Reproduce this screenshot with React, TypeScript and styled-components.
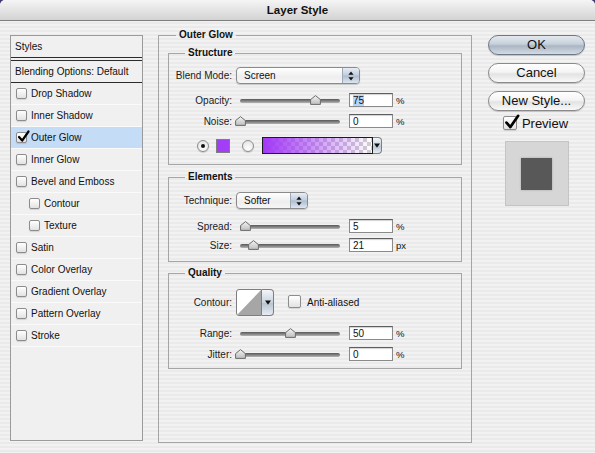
import React from "react";
import styled, { createGlobalStyle, css } from "styled-components";

const GlobalStyle = createGlobalStyle`
  html, body { margin: 0; padding: 0; background: #3b376c; }
  body { font-family: "Liberation Sans", Arial, sans-serif; font-size: 10px; color: #111; }
  * { box-sizing: border-box; }
`;

const pinstripe = css`
  background-color: #efefef;
  background-image: repeating-linear-gradient(
    180deg,
    #f2f2f2 0px,
    #f2f2f2 2px,
    #eaeaea 2px,
    #eaeaea 4px
  );
`;

const Window = styled.div`
  width: 595px;
  height: 453px;
  overflow: hidden;
  ${pinstripe}
  border-radius: 5px 5px 0 0;
  display: flex;
  flex-direction: column;
`;

const TitleBar = styled.div`
  height: 21px;
  flex: none;
  background: linear-gradient(#f5f5f5, #d3d3d3);
  border-bottom: 1px solid #7d7d7d;
  border-radius: 5px 5px 0 0;
  display: flex;
  align-items: center;
  justify-content: center;
  font-weight: bold;
  font-size: 11.5px;
  color: #111;
`;

const Body = styled.div`
  display: flex;
  align-items: flex-start;
  padding: 8px 10px 0 10px;
`;

/* ---------- left styles list ---------- */

const StylesPanel = styled.div`
  width: 133px;
  height: 406px;
  margin-top: 6px;
  border: 1px solid #9b9b9b;
  background: #f0f0f0;
  display: flex;
  flex-direction: column;
  flex: none;
`;

const PanelHeader = styled.div<{ $top?: boolean }>`
  height: ${(p) => (p.$top ? 22 : 23)}px;
  display: flex;
  align-items: center;
  padding-left: 4px;
  border-bottom: 1px solid #2b2b2b;
  ${(p) =>
    !p.$top &&
    css`
      margin-top: 2px;
      border-top: 1px solid #2b2b2b;
    `}
`;

const StyleItem = styled.div<{ $sub?: boolean; $active?: boolean }>`
  height: 22px;
  display: flex;
  align-items: center;
  gap: 4px;
  padding-left: ${(p) => (p.$sub ? 18 : 5)}px;
  border-bottom: 1px solid #fafafa;
  background: ${(p) => (p.$active ? "#c5dcf6" : "transparent")};
`;

const Box = styled.span<{ $size: number }>`
  width: ${(p) => p.$size}px;
  height: ${(p) => p.$size}px;
  flex: none;
  border: 1px solid #8c8c8c;
  border-radius: 2px;
  background: linear-gradient(#ffffff, #e2e2e2);
  box-shadow: 0 1px 1px rgba(0, 0, 0, 0.12);
  position: relative;
  display: inline-flex;
  align-items: center;
  justify-content: center;
`;

const CheckMark = styled.svg`
  position: absolute;
  left: 0px;
  top: -3px;
  overflow: visible;
`;

const Checkbox: React.FC<{ size?: number; checked?: boolean }> = ({ size = 11, checked }) => (
  <Box $size={size}>
    {checked && (
      <CheckMark width={size + 2} height={size + 2} viewBox="0 0 13 13">
        <path d="M2 7 L5.2 10.6 L11.5 1.5" fill="none" stroke="#000" strokeWidth="2.2" strokeLinecap="round" strokeLinejoin="round" />
      </CheckMark>
    )}
  </Box>
);

/* ---------- main settings ---------- */

const MainGroup = styled.fieldset`
  width: 314px;
  height: 414px;
  margin: 0 0 0 15px;
  padding: 0 9px;
  border: 1px solid #a5a5a5;
  flex: none;
  min-width: 0;
`;

const Legend = styled.legend<{ $inset: number }>`
  font-weight: bold;
  font-size: 10px;
  line-height: 12px;
  padding: 0 3px;
  margin-left: ${(p) => p.$inset}px;
  color: #111;
`;

const SubGroup = styled.fieldset<{ $pt: number; $pb: number; $mt: number }>`
  margin: ${(p) => p.$mt}px 0 0 0;
  padding: ${(p) => p.$pt}px 0 ${(p) => p.$pb}px 0;
  border: 1px solid #a5a5a5;
  min-width: 0;
`;

const Row = styled.div<{ $mt?: number; $h: number; $indent?: number }>`
  display: flex;
  align-items: center;
  height: ${(p) => p.$h}px;
  margin-top: ${(p) => p.$mt ?? 0}px;
  padding-left: ${(p) => p.$indent ?? 0}px;
`;

const Label = styled.span`
  width: 63px;
  flex: none;
  text-align: right;
  margin-right: 4px;
  white-space: nowrap;
  color: #1a1a1a;
`;

const SelectBox = styled.div<{ $w: number }>`
  width: ${(p) => p.$w}px;
  height: 17px;
  border: 1px solid #8a8a8a;
  border-radius: 4px;
  background: linear-gradient(#ffffff, #eeeeee 60%, #f6f6f6);
  box-shadow: 0 1px 1px rgba(0, 0, 0, 0.18);
  display: flex;
  align-items: stretch;
  overflow: hidden;
`;

const SelectText = styled.span`
  flex: 1;
  padding-left: 7px;
  display: flex;
  align-items: center;
`;

const Stepper = styled.span`
  width: 17px;
  border-left: 1px solid #9ea8b4;
  background: linear-gradient(#e6edf5, #c1cedd 48%, #adbdd0 52%, #dde6f0);
  display: flex;
  align-items: center;
  justify-content: center;
`;

const Select: React.FC<{ w: number; value: string }> = ({ w, value }) => (
  <SelectBox $w={w}>
    <SelectText>{value}</SelectText>
    <Stepper>
      <svg width="6" height="10" viewBox="0 0 6 10">
        <path d="M3 0.5 L5.6 3.8 L0.4 3.8 Z" fill="#111" />
        <path d="M3 9.5 L5.6 6.2 L0.4 6.2 Z" fill="#111" />
      </svg>
    </Stepper>
  </SelectBox>
);

const SliderWrap = styled.div`
  position: relative;
  width: 108px;
  height: 14px;
  flex: none;
`;

const Track = styled.div`
  position: absolute;
  left: 4px;
  right: 4px;
  top: 6px;
  height: 4px;
  border-radius: 2px;
  background: linear-gradient(#575757, #8c8c8c 60%, #b5b5b5);
`;

const Thumb = styled.svg`
  position: absolute;
  top: 2px;
  margin-left: -5px;
`;

const Slider: React.FC<{ pct: number }> = ({ pct }) => (
  <SliderWrap>
    <Track />
    <Thumb width="11" height="10" viewBox="0 0 11 10" style={{ left: 4 + pct }}>
      <defs>
        <linearGradient id="thumbg" x1="0" y1="0" x2="0" y2="1">
          <stop offset="0" stopColor="#f4f4f4" />
          <stop offset="1" stopColor="#bdbdbd" />
        </linearGradient>
      </defs>
      <path d="M5.5 0.6 L10.4 4.6 L10.4 9.4 L0.6 9.4 L0.6 4.6 Z" fill="url(#thumbg)" stroke="#6b6b6b" strokeWidth="1" />
    </Thumb>
  </SliderWrap>
);

const NumInput = styled.div`
  width: 44px;
  height: 14px;
  margin-left: 5px;
  border: 1px solid #8a8a8a;
  border-top-color: #5e5e5e;
  background: #fff;
  box-shadow: inset 0 1px 1px rgba(0, 0, 0, 0.18);
  padding-left: 3px;
  display: flex;
  align-items: center;
  font-size: 10px;
  flex: none;
`;

const Selected = styled.span`
  background: #b4d4fb;
`;

const Unit = styled.span`
  margin-left: 3px;
  font-size: 9.5px;
`;

const Radio = styled.span<{ $on?: boolean; $ml?: number }>`
  width: 12px;
  height: 12px;
  border-radius: 50%;
  flex: none;
  margin-left: ${(p) => p.$ml ?? 0}px;
  border: 1px solid #8c8c8c;
  background: radial-gradient(circle at 50% 70%, #ffffff, #dedede);
  box-shadow: 0 1px 1px rgba(0, 0, 0, 0.15);
  display: flex;
  align-items: center;
  justify-content: center;
  &::after {
    content: "";
    width: 4px;
    height: 4px;
    border-radius: 50%;
    background: #111;
    display: ${(p) => (p.$on ? "block" : "none")};
  }
`;

const Swatch = styled.span`
  width: 14px;
  height: 14px;
  margin-left: 7px;
  flex: none;
  background: #a23ef6;
  border: 1px solid #7e7e7e;
`;

const GradientPicker = styled.div`
  margin-left: 8px;
  height: 17px;
  display: flex;
  flex: none;
`;

const GradientBar = styled.div`
  width: 111px;
  border: 1px solid #1b1b1b;
  background:
    linear-gradient(to right, rgba(162, 56, 246, 1), rgba(162, 56, 246, 0)),
    repeating-conic-gradient(#cfcfcf 0 25%, #ffffff 0 50%) 0 0 / 8px 8px;
`;

const SmallArrowButton = styled.div<{ $w: number }>`
  width: ${(p) => p.$w}px;
  border: 1px solid #7e7e7e;
  border-left: none;
  border-radius: 0 4px 4px 0;
  background: linear-gradient(#f3f6f9, #c9d3de 50%, #b7c3d0 52%, #e6ecf2);
  display: flex;
  align-items: center;
  justify-content: center;
`;

const DownTri: React.FC = () => (
  <svg width="6" height="5" viewBox="0 0 6 5">
    <path d="M0 0.5 L6 0.5 L3 4.8 Z" fill="#111" />
  </svg>
);

const ContourPicker = styled.div`
  height: 27px;
  display: flex;
  flex: none;
`;

const ContourPreview = styled.div`
  width: 26px;
  border: 1px solid #7e7e7e;
  border-radius: 3px 0 0 3px;
  background: #fff;
  overflow: hidden;
  display: flex;
`;

const CheckLabel = styled.span<{ $ml: number; $size?: number }>`
  margin-left: ${(p) => p.$ml}px;
  font-size: ${(p) => p.$size ?? 10}px;
`;

/* ---------- right side ---------- */

const Side = styled.div`
  width: 97px;
  margin: 6px 0 0 16px;
  display: flex;
  flex-direction: column;
  align-items: center;
  flex: none;
`;

const AquaButton = styled.button<{ $default?: boolean }>`
  width: 97px;
  height: 20px;
  margin-bottom: 8px;
  border-radius: 10px;
  border: 1px solid ${(p) => (p.$default ? "#6d7886" : "#8a8a8a")};
  background: ${(p) =>
    p.$default
      ? "linear-gradient(#e4e9ef, #c7d0da 45%, #aab6c4 55%, #d3dbe4)"
      : "linear-gradient(#ffffff, #f4f4f4 45%, #e3e3e3 55%, #f8f8f8)"};
  box-shadow: 0 1px 1px rgba(0, 0, 0, 0.18);
  font-family: "Liberation Sans", Arial, sans-serif;
  font-size: 13px;
  color: #111;
  padding: 0;
  line-height: 18px;
`;

const PreviewRow = styled.div`
  height: 16px;
  margin-top: -4px;
  display: flex;
  align-items: center;
  padding-right: 2px;
`;

const PreviewBox = styled.div`
  width: 64px;
  height: 65px;
  margin-top: 10px;
  background: #d6d6d6;
  border: 1px solid #c4c4c4;
  display: flex;
  align-items: center;
  justify-content: center;
`;

const PreviewSquare = styled.div`
  width: 31px;
  height: 32px;
  background: #585858;
  box-shadow: 0 0 2px rgba(0, 0, 0, 0.25);
`;

const items: { label: string; sub?: boolean; checked?: boolean; active?: boolean }[] = [
  { label: "Drop Shadow" },
  { label: "Inner Shadow" },
  { label: "Outer Glow", checked: true, active: true },
  { label: "Inner Glow" },
  { label: "Bevel and Emboss" },
  { label: "Contour", sub: true },
  { label: "Texture", sub: true },
  { label: "Satin" },
  { label: "Color Overlay" },
  { label: "Gradient Overlay" },
  { label: "Pattern Overlay" },
  { label: "Stroke" },
];

export default function App() {
  return (
    <>
      <GlobalStyle />
      <Window>
        <TitleBar>Layer Style</TitleBar>
        <Body>
          <StylesPanel>
            <PanelHeader $top>Styles</PanelHeader>
            <PanelHeader>Blending Options: Default</PanelHeader>
            {items.map((it) => (
              <StyleItem key={it.label} $sub={it.sub} $active={it.active}>
                <Checkbox checked={it.checked} />
                <span>{it.label}</span>
              </StyleItem>
            ))}
          </StylesPanel>

          <MainGroup>
            <Legend $inset={8}>Outer Glow</Legend>

            <SubGroup $mt={6} $pt={8} $pb={10}>
              <Legend $inset={16}>Structure</Legend>
              <Row $h={17}>
                <Label>Blend Mode:</Label>
                <Select w={124} value="Screen" />
              </Row>
              <Row $h={14} $mt={9}>
                <Label>Opacity:</Label>
                <Slider pct={75} />
                <NumInput>
                  <Selected>75</Selected>
                </NumInput>
                <Unit>%</Unit>
              </Row>
              <Row $h={14} $mt={7}>
                <Label>Noise:</Label>
                <Slider pct={0} />
                <NumInput>0</NumInput>
                <Unit>%</Unit>
              </Row>
              <Row $h={17} $mt={9} $indent={28}>
                <Radio $on />
                <Swatch />
                <Radio $ml={12} />
                <GradientPicker>
                  <GradientBar />
                  <SmallArrowButton $w={9}>
                    <DownTri />
                  </SmallArrowButton>
                </GradientPicker>
              </Row>
            </SubGroup>

            <SubGroup $mt={6} $pt={9} $pb={9}>
              <Legend $inset={16}>Elements</Legend>
              <Row $h={17}>
                <Label>Technique:</Label>
                <Select w={72} value="Softer" />
              </Row>
              <Row $h={14} $mt={10}>
                <Label>Spread:</Label>
                <Slider pct={5} />
                <NumInput>5</NumInput>
                <Unit>%</Unit>
              </Row>
              <Row $h={14} $mt={5}>
                <Label>Size:</Label>
                <Slider pct={13} />
                <NumInput>21</NumInput>
                <Unit>px</Unit>
              </Row>
            </SubGroup>

            <SubGroup $mt={5} $pt={10} $pb={7}>
              <Legend $inset={16}>Quality</Legend>
              <Row $h={27}>
                <Label>Contour:</Label>
                <ContourPicker>
                  <ContourPreview>
                    <svg width="24" height="25" viewBox="0 0 24 25">
                      <path d="M0 25 L24 0 L24 25 Z" fill="#a6a6a6" />
                    </svg>
                  </ContourPreview>
                  <SmallArrowButton $w={12}>
                    <DownTri />
                  </SmallArrowButton>
                </ContourPicker>
                <CheckLabel $ml={14}>
                  <Checkbox size={13} />
                </CheckLabel>
                <CheckLabel $ml={6}>Anti-aliased</CheckLabel>
              </Row>
              <Row $h={14} $mt={10}>
                <Label>Range:</Label>
                <Slider pct={50} />
                <NumInput>50</NumInput>
                <Unit>%</Unit>
              </Row>
              <Row $h={14} $mt={7}>
                <Label>Jitter:</Label>
                <Slider pct={0} />
                <NumInput>0</NumInput>
                <Unit>%</Unit>
              </Row>
            </SubGroup>
          </MainGroup>

          <Side>
            <AquaButton $default>OK</AquaButton>
            <AquaButton>Cancel</AquaButton>
            <AquaButton>New Style...</AquaButton>
            <PreviewRow>
              <Checkbox size={14} checked />
              <CheckLabel $ml={5} $size={13}>
                Preview
              </CheckLabel>
            </PreviewRow>
            <PreviewBox>
              <PreviewSquare />
            </PreviewBox>
          </Side>
        </Body>
      </Window>
    </>
  );
}
